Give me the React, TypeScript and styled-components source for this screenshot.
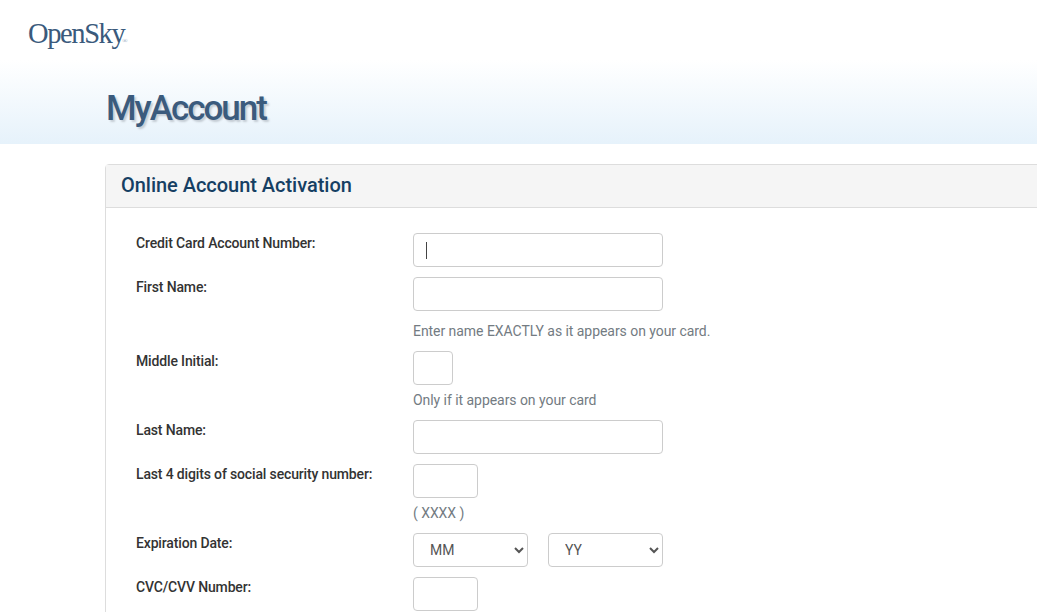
import React from 'react';
import styled, { createGlobalStyle } from 'styled-components';

const GlobalStyle = createGlobalStyle`
  html, body {
    margin: 0;
    padding: 0;
    background: #fff;
    overflow: hidden;
    font-family: Roboto, "Open Sans", sans-serif;
  }
`;

const Page = styled.div`
  width: 1037px;
  height: 612px;
  overflow: hidden;
`;

const TopBar = styled.div`
  height: 60px;
  padding: 16px 0 0 28px;
  box-sizing: border-box;
`;

const Logo = styled.div`
  font-family: "Liberation Serif", serif;
  font-size: 28.5px;
  line-height: 36px;
  letter-spacing: -1.4px;
  color: #3a5a7c;
`;

const LogoMark = styled.span`
  margin-left: -2px;
  font-size: 7px;
  letter-spacing: 0;
  color: #8fa3b8;
`;

const Banner = styled.div`
  height: 84px;
  padding-left: 106px;
  box-sizing: border-box;
  background: linear-gradient(to bottom, #ffffff 0%, #e6f2fb 100%);
`;

const PageTitle = styled.h1`
  margin: 0;
  padding-top: 26px;
  font-size: 35px;
  line-height: 46px;
  font-weight: 500;
  letter-spacing: -2px;
  color: #3b5b7d;
  text-shadow: 2px 2px 2px #c4ccd4;
`;

const Panel = styled.div`
  margin: 20px -20px 0 105px;
  border: 1px solid #dddddd;
  border-radius: 4px 0 0 0;
`;

const PanelHeader = styled.div`
  height: 42px;
  padding-left: 15px;
  background: #f5f5f5;
  border-bottom: 1px solid #dddddd;
`;

const PanelTitle = styled.h2`
  margin: 0;
  font-size: 20px;
  line-height: 41px;
  font-weight: 500;
  letter-spacing: -0.03px;
  color: #163f63;
`;

const PanelBody = styled.div`
  padding: 25px 0 40px 30px;
  display: flex;
  flex-direction: column;
  gap: 10px;
`;

const Row = styled.div`
  display: grid;
  grid-template-columns: 277px 1fr;
`;

const Label = styled.label`
  font-size: 14px;
  line-height: 20px;
  font-weight: 500;
  letter-spacing: -0.15px;
  color: #333333;
`;

const Field = styled.div`
  display: flex;
  flex-direction: column;
  align-items: flex-start;
`;

const InputWrap = styled.div`
  position: relative;
`;

const Input = styled.input<{ $width: number }>`
  display: block;
  width: ${(p) => p.$width}px;
  height: 34px;
  box-sizing: border-box;
  padding: 6px 12px;
  border: 1px solid #cccccc;
  border-radius: 4px;
  background: #fff;
  outline: none;
`;

const Caret = styled.span`
  position: absolute;
  left: 13px;
  top: 9px;
  width: 1px;
  height: 17px;
  background: #444;
`;

const Hint = styled.div<{ $gap: number }>`
  margin-top: ${(p) => p.$gap}px;
  font-size: 14px;
  line-height: 20px;
  letter-spacing: -0.05px;
  color: #737b82;
`;

const Selects = styled.div`
  display: flex;
  gap: 20px;
`;

const Select = styled.select`
  width: 115px;
  height: 34px;
  box-sizing: border-box;
  padding: 6px 12px;
  border: 1px solid #cccccc;
  border-radius: 4px;
  background: #fff;
  font-family: inherit;
  font-size: 14px;
  color: #555555;
  outline: none;
`;

const App: React.FC = () => {
  return (
    <>
      <GlobalStyle />
      <Page>
        <TopBar>
          <Logo>OpenSky<LogoMark>®</LogoMark></Logo>
        </TopBar>
        <Banner>
          <PageTitle>MyAccount</PageTitle>
        </Banner>
        <Panel>
          <PanelHeader>
            <PanelTitle>Online Account Activation</PanelTitle>
          </PanelHeader>
          <PanelBody>
            <Row>
              <Label>Credit Card Account Number:</Label>
              <Field>
                <InputWrap>
                  <Input $width={250} />
                  <Caret />
                </InputWrap>
              </Field>
            </Row>
            <Row>
              <Label>First Name:</Label>
              <Field>
                <Input $width={250} />
                <Hint $gap={10}>Enter name EXACTLY as it appears on your card.</Hint>
              </Field>
            </Row>
            <Row>
              <Label>Middle Initial:</Label>
              <Field>
                <Input $width={40} />
                <Hint $gap={5}>Only if it appears on your card</Hint>
              </Field>
            </Row>
            <Row>
              <Label>Last Name:</Label>
              <Field>
                <Input $width={250} />
              </Field>
            </Row>
            <Row>
              <Label>Last 4 digits of social security number:</Label>
              <Field>
                <Input $width={65} />
                <Hint $gap={5}>( XXXX )</Hint>
              </Field>
            </Row>
            <Row>
              <Label>Expiration Date:</Label>
              <Selects>
                <Select defaultValue="MM">
                  <option>MM</option>
                </Select>
                <Select defaultValue="YY">
                  <option>YY</option>
                </Select>
              </Selects>
            </Row>
            <Row>
              <Label>CVC/CVV Number:</Label>
              <Field>
                <Input $width={65} />
              </Field>
            </Row>
          </PanelBody>
        </Panel>
      </Page>
    </>
  );
};

export default App;
